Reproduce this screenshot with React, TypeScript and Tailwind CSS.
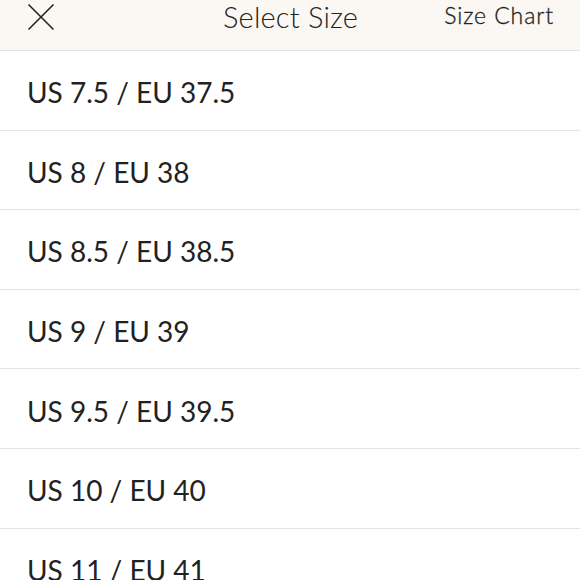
const sizes = [
  'US 7.5 / EU 37.5',
  'US 8 / EU 38',
  'US 8.5 / EU 38.5',
  'US 9 / EU 39',
  'US 9.5 / EU 39.5',
  'US 10 / EU 40',
  'US 11 / EU 41',
];

export default function App() {
  return (
    <div className="h-[580px] w-[580px] overflow-hidden bg-white font-['Lato','Liberation_Sans',sans-serif] text-[#222]">
      <header className="relative flex h-[51px] items-center border-b border-[#e4e1de] bg-[#fbf7f3]">
        <button className="ml-[27px] mt-[-17px] flex h-[28px] w-[28px] items-center justify-center text-[#222]">
          <svg width="28" height="28" viewBox="0 0 28 28" fill="none" stroke="currentColor" strokeWidth="1.6">
            <path d="M1.5 1.5 L26.5 26.5 M26.5 1.5 L1.5 26.5" />
          </svg>
        </button>
        <h1 className="absolute left-[223px] top-[-1px] pt-[3px] text-[29px] font-light leading-none tracking-[0.2px]">
          Select Size
        </h1>
        <span className="absolute right-[26px] top-[4px] text-[23px] font-light leading-none tracking-[0.9px] [-webkit-text-stroke:0.3px_#222]">
          Size Chart
        </span>
      </header>
      <ul>
        {sizes.map((s) => (
          <li
            key={s}
            className="flex h-[79.6px] items-center border-b border-[#e6e3e0] pl-[27px] pt-[4px] text-[28px] leading-none"
          >
            {s}
          </li>
        ))}
      </ul>
    </div>
  );
}
